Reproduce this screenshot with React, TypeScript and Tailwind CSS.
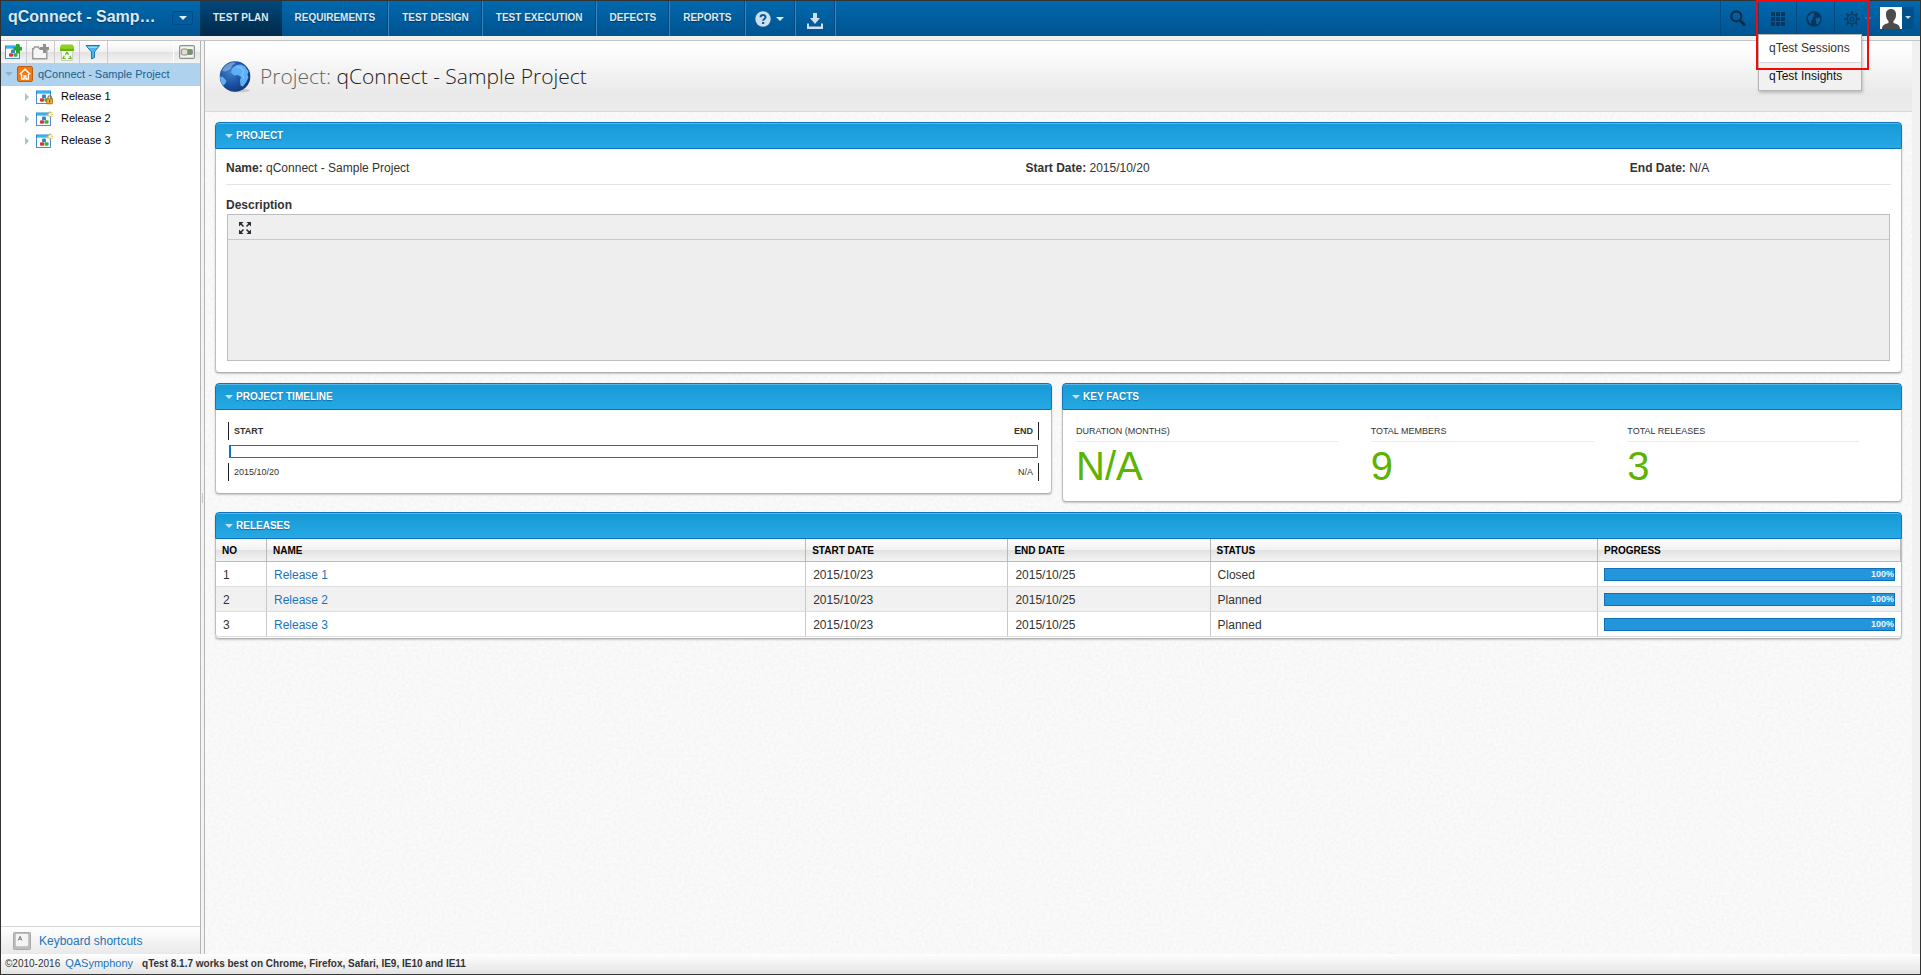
import React from "react";

const CARET = "h-0 w-0 border-x-4 border-t-4 border-x-transparent";

function WindowIcon({ badge }: { badge: "lock" | "spark" | "plus" }) {
  return (
    <svg width="17" height="16" viewBox="0 0 17 16" aria-hidden="true">
      <rect x="0.5" y="2.5" width="14" height="12" fill="#fdfeff" stroke="#4a8fd0" />
      <rect x="0" y="1.5" width="15" height="3" fill="#1f86dc" />
      <rect x="1" y="2.3" width="13" height="1.5" fill="#37c5f5" />
      <rect x="6" y="5.600" width="4" height="3.600" rx="1" fill="#3a7fd0" />
      <rect x="4" y="9.200" width="4" height="3.600" rx="1" fill="#d23a34" />
      <rect x="8.500" y="9.200" width="4" height="3.600" rx="1" fill="#3fae3a" />
      {badge === "plus" && <path d="M11 0h3.500v3H17v3.500h-2.500v3H11v-3H8.500V3H11z" fill="#2aa52c" />}
      {badge === "lock" && (
        <g>
          <path d="M12 10V8.700a1.800 1.800 0 0 1 3.600 0V10" fill="none" stroke="#8d7a4e" strokeWidth="1.3" />
          <rect x="10.600" y="9.800" width="6" height="5" rx="0.5" fill="#f5b23a" stroke="#9c6410" strokeWidth="0.8" />
          <rect x="13.100" y="11" width="1.100" height="2.400" fill="#6b4208" />
        </g>
      )}
      {badge === "spark" && (
        <g>
          <path d="M14 0v7M10.500 3.500H17M11.600 1.100l4.800 4.800M16.400 1.100l-4.800 4.800" stroke="#d9bd3c" strokeWidth="0.9" />
          <circle cx="14" cy="3.500" r="1.500" fill="#fffbd0" />
        </g>
      )}
    </svg>
  );
}

function HomeIcon() {
  return (
    <svg width="16" height="16" viewBox="0 0 16 16" aria-hidden="true">
      <rect x="0.5" y="0.5" width="15" height="15" rx="1.5" fill="#f27a10" stroke="#c85a06" />
      <path d="M2.8 8.3 8 3.3l5.2 5" fill="none" stroke="#fff" strokeWidth="1.5" />
      <path d="M4.6 8v5h2.5v-3h1.8v3h2.5V8" fill="none" stroke="#fff" strokeWidth="1.3" />
    </svg>
  );
}

function NewFolderIcon() {
  return (
    <svg width="17" height="16" viewBox="0 0 17 16" aria-hidden="true">
      <path d="M.7 14.800V4.700h1l.8-1.700h4l.8 1.700h7.500v10.100z" fill="#f5f5f5" stroke="#9a9a9a" strokeWidth="1.400" />
      <path d="M11 0h3v3h3v3h-3v3h-3V6H8V3h3z" fill="#8f8f8f" />
    </svg>
  );
}

function RecycleIcon() {
  return (
    <svg width="16" height="17" viewBox="0 0 16 17" aria-hidden="true">
      <path d="M2 6h12l-.8 10.500H2.800z" fill="#f3f6ee" stroke="#b9c2ad" strokeWidth="0.8" />
      <path d="M2.500.5h11L15 3v4H1V3z" fill="#92d021" />
      <path d="M1 4.800h14V7H1z" fill="#6bb30d" />
      <path d="M6.300 10.700 8 8.300l1.700 2.400M10.800 11.800l1.200 2.700H9.200M6.800 14.500H4l1.300-2.700" fill="none" stroke="#6fb02a" strokeWidth="1.200" />
    </svg>
  );
}

function FunnelIcon() {
  return (
    <svg width="16" height="16" viewBox="0 0 16 16" aria-hidden="true">
      <path d="M1 1.500h13.500L9.500 8v5.500l-3 1.500V8z" fill="#4fb4ec" stroke="#1779b8" />
      <path d="M2.800 2.700h9.900l-.8 1H3.600z" fill="#b9e4fb" />
    </svg>
  );
}

function ToggleIcon() {
  return (
    <svg width="16" height="14" viewBox="0 0 16 14" aria-hidden="true">
      <rect x="0.600" y="0.600" width="14.800" height="12.800" rx="1.500" fill="#f2f4f2" stroke="#87938a" strokeWidth="1.200" />
      <rect x="2.500" y="4.500" width="11" height="5" rx="1" fill="#6f9a5c" stroke="#7c877f" strokeWidth="0.800" />
      <rect x="2.300" y="4" width="6.500" height="6" rx="1.800" fill="#e2ded4" stroke="#85827a" strokeWidth="0.900" />
    </svg>
  );
}

function GlobeBadge() {
  return (
    <svg width="32" height="32" viewBox="0 0 32 32" aria-hidden="true">
      <defs>
        <radialGradient id="ocean" cx="0.35" cy="0.35" r="0.75">
          <stop offset="0" stopColor="#3f7fc8" />
          <stop offset="0.5" stopColor="#1f56a8" />
          <stop offset="1" stopColor="#103274" />
        </radialGradient>
      </defs>
      <ellipse cx="20" cy="29.500" rx="11" ry="1.800" fill="#c9c9c9" />
      <circle cx="16" cy="15.500" r="15.300" fill="url(#ocean)" />
      <path d="M3 10C4.500 6 8 2.500 14 1.300l3 .7-4 2.500-1 3-3 2-2.500 1z" fill="#a5c8ea" opacity=".55" />
      <path d="M1 15.500l3 .5 3.500 4-1.500 3-2 1.500C2 21.500 1 18.500 1 15.500z" fill="#63aef0" />
      <path d="M13 7.500 17.500 4l5-.5 3.500 2 3.500 5-1 3 1 3-2.500 5-3 4-2.500-1-.5-5.500 1-3-3-2-4 .5-3-3 .5-2.500z" fill="#5eb0f5" />
      <path d="M17 6l5 .5 3 4-2 3 2 4" fill="none" stroke="#93d0ff" strokeWidth="1.200" opacity=".7" />
    </svg>
  );
}

function SmallGlobe() {
  return (
    <svg width="16" height="16" viewBox="0 0 16 16" aria-hidden="true">
      <circle cx="8" cy="8" r="7.800" fill="#06365f" />
      <path d="M1.500 6 5 2.500l3.500-.8-1 2L9 5 6.500 6 7 8l-2 1 .5 3-1 .8L2.800 10z" fill="#0b5f9f" />
      <path d="M10.500 7l3.500-.5.500 3-3 4-1.500-1 .3-2.500-1-1.500z" fill="#0b5f9f" />
    </svg>
  );
}

function GearIcon() {
  return (
    <svg width="16" height="16" viewBox="0 0 16 16" fill="none" stroke="#0a3c68" aria-hidden="true">
      <circle cx="8" cy="8" r="4.700" strokeWidth="1.500" />
      <circle cx="8" cy="8" r="1.900" strokeWidth="1.400" />
      <path d="M8 .3v2.500M8 13.200v2.500M.3 8h2.500M13.200 8h2.500M2.600 2.600l1.700 1.700M11.700 11.700l1.700 1.700M13.400 2.600l-1.700 1.700M4.300 11.700l-1.700 1.700" strokeWidth="2" />
    </svg>
  );
}

const navItems = ["REQUIREMENTS", "TEST DESIGN", "TEST EXECUTION", "DEFECTS", "REPORTS"];
const navCell = "flex items-center border-r border-r-[#3a83ba] shadow-[inset_-1px_0_0_#014a80]";
const darkCell = "flex items-center justify-center border-l border-l-[#014a80]";

function TopBar() {
  return (
    <header className="flex h-[35px] shrink-0 bg-linear-to-b from-[#0069ad] to-[#005391]">
      <div className="flex w-[199px] shrink-0 items-center justify-between pr-[7px] pb-[3px] pl-[7px]">
        <span className="text-[16px] leading-6 font-bold text-[#dce8f2] [text-shadow:0_1px_1px_#00335c]">qConnect - Samp…</span>
        <button aria-label="Switch project" className="mt-[2px] flex h-[14px] w-[21px] items-center justify-center rounded-[3px] border border-[#00498a] bg-[#005ea0]">
          <span className={`${CARET} border-t-[#e6eef5]`} />
        </button>
      </div>
      <nav className="flex text-[10px] font-bold text-[#dfe9f1] [text-shadow:0_1px_1px_#00335c]">
        <a href="#plan" className="flex items-center bg-linear-to-b from-[#00487c] to-[#002a49] px-[13px] pb-[3px]">
          TEST PLAN
        </a>
        {navItems.map((n) => (
          <a key={n} href="#section" className={`${navCell} px-[13px] pb-[3px]`}>
            {n}
          </a>
        ))}
        <button aria-label="Help" className={`${navCell} w-[50px] justify-center gap-[5px] pr-[2px]`}>
          <svg width="16" height="16" viewBox="0 0 16 16" aria-hidden="true">
            <circle cx="8" cy="8" r="7.700" fill="#cfdfec" />
            <path d="M5.600 6.200c0-3 4.900-3 4.900 0 0 1.800-2.400 1.700-2.400 3.600" fill="none" stroke="#005c9c" strokeWidth="2" />
            <rect x="7" y="11" width="2.200" height="2" fill="#005c9c" />
          </svg>
          <span className={`${CARET} border-t-[#dfe9f1]`} />
        </button>
        <button aria-label="Download" className={`${navCell} w-10 justify-center pt-1`}>
          <svg width="16" height="16" viewBox="0 0 16 16" fill="#cfdfec" aria-hidden="true">
            <path d="M6 0h4v5h3L8 11 3 5h3z" />
            <path d="M0 10.500h2v3h12v-3h2V16H0z" />
          </svg>
        </button>
      </nav>
      <div className="ml-auto flex">
        <button aria-label="Search" className={`${darkCell} w-[38px] pr-1`}>
          <svg width="16" height="17" viewBox="0 0 16 17" fill="none" stroke="#0a2c49" aria-hidden="true">
            <circle cx="6.300" cy="6.300" r="5" strokeWidth="2.200" />
            <path d="M10 10.200l5 5.300" strokeWidth="2.800" />
          </svg>
        </button>
        <div className="relative flex">
          <button aria-label="Applications" className={`${darkCell} w-[38px]`}>
            <svg width="14" height="14" viewBox="0 0 14 14" fill="#07365f" aria-hidden="true">
              {[0, 5, 10].map((y) => [0, 5, 10].map((x) => <rect key={`${x}-${y}`} x={x} y={y} width="4" height="4" />))}
            </svg>
          </button>
          <div role="menu" className="absolute top-[33px] left-0 z-10 w-[104px] border border-[#b4b4b4] bg-[#f1f1f1] text-[12px] leading-[27px] text-[#111] shadow-[1px_2px_3px_rgba(0,0,0,0.2)]">
            <a role="menuitem" href="#sessions" className="block border-b border-[#d8d8d8] bg-white pl-[10px] text-[#333]">
              qTest Sessions
            </a>
            <a role="menuitem" href="#insights" className="block pl-[10px]">
              qTest Insights
            </a>
          </div>
          <div className="pointer-events-none absolute -top-px -left-[2px] z-20 h-[70px] w-[113px] border-2 border-[#f50a0a]" />
        </div>
        <button aria-label="Language" className={`${darkCell} w-[38px] pr-1`}>
          <SmallGlobe />
        </button>
        <button aria-label="Settings" className={`${darkCell} w-[46px] gap-1`}>
          <GearIcon />
          <span className={`${CARET} border-t-[#3d6f9c]`} />
        </button>
        <button aria-label="Account" className="mr-[6px] flex items-center pb-[2px]">
          <svg width="22" height="22" viewBox="0 0 22 22" aria-hidden="true">
            <rect width="22" height="22" fill="#fff" />
            <path d="M2 22c0-4 3-5 6.500-6v-2C6 12 6 9 6 7c0-3.500 2.500-5 5-5s5 1.500 5 5c0 2 0 5-2.500 7v2c3.500 1 6.500 2 6.500 6z" fill="#4c4c4c" />
          </svg>
          <span className="flex h-[22px] w-3 items-center justify-center bg-[#00508c]">
            <span className="h-0 w-0 border-x-3 border-t-3 border-x-transparent border-t-[#c5d6e5]" />
          </span>
        </button>
      </div>
    </header>
  );
}

const barGradient = "bg-[linear-gradient(#ffffff,#f1f1f1_50%,#e2e2e2_50%,#f4f4f4)]";
const toolButton = "flex items-center justify-center border-r border-[#cbcbcb]";

function Sidebar() {
  return (
    <aside className="flex w-[199px] shrink-0 flex-col bg-white text-[11px]">
      <div className={`flex h-[22px] shrink-0 ${barGradient}`}>
        <button aria-label="New release" className={`${toolButton} w-[26px] pr-px`}>
          <WindowIcon badge="plus" />
        </button>
        <button aria-label="New folder" className={`${toolButton} w-7`}>
          <NewFolderIcon />
        </button>
        <button aria-label="Recycle" className={`${toolButton} w-[25px]`}>
          <RecycleIcon />
        </button>
        <button aria-label="Filter" className={`${toolButton} w-7 pr-[2px]`}>
          <FunnelIcon />
        </button>
        <button aria-label="Toggle view" className="ml-auto flex w-[27px] items-center justify-center border-l border-white pr-px">
          <ToggleIcon />
        </button>
      </div>
      <ul className="grow">
        <li className="flex h-[23px] items-center bg-[#afd3ee] pb-px pl-1 text-[#17608f]">
          <span className={`${CARET} border-t-[#8fb4c9]`} />
          <span className="mr-[5px] ml-1">
            <HomeIcon />
          </span>
          qConnect - Sample Project
        </li>
        {(["lock", "spark", "spark"] as const).map((badge, i) => (
          <li key={i} className="flex h-[22px] items-center pb-px pl-6 text-black">
            <span className="h-0 w-0 border-y-4 border-l-4 border-y-transparent border-l-[#a9c3cf]" />
            <span className="mr-2 ml-[7px]">
              <WindowIcon badge={badge} />
            </span>
            Release {i + 1}
          </li>
        ))}
      </ul>
      <a href="#shortcuts" className="flex h-7 shrink-0 items-center gap-2 border-t border-[#d5d5d5] bg-linear-to-b from-white to-[#e9e9e9] pt-px pl-3 text-[12px] text-[#1a75bb]">
        <svg width="18" height="18" viewBox="0 0 19 19" aria-hidden="true">
          <rect x="0.500" y="0.500" width="18" height="18" rx="1" fill="#bdbdbd" stroke="#a6a6a6" />
          <rect x="3" y="2" width="13" height="13" rx="1.500" fill="#f4f4f4" />
          <path d="M5.500 9 7.500 4.500 9.500 9M6.300 7.500h2.400" fill="none" stroke="#777" />
        </svg>
        Keyboard shortcuts
      </a>
    </aside>
  );
}

function Panel({ title, children }: { title: string; children: React.ReactNode }) {
  return (
    <section className="rounded-[4px] border-b border-[#b0b0b0] bg-white shadow-[0_1px_2px_rgba(0,0,0,0.2)]">
      <h2 className="flex h-[27px] items-center rounded-t-[4px] border border-[#0f74bd] bg-linear-to-b from-[#159ad5] to-[#26a8e4] pl-[9px] text-[10px] font-bold text-white shadow-[inset_0_1px_0_#56b9e8] [text-shadow:0_1px_1px_#0c6ba6]">
        <span className={`mr-[3px] ${CARET} border-t-[#bfe6fa]`} />
        {title}
      </h2>
      <div className="rounded-b-[4px] border-x border-[#bdbdbd]">{children}</div>
    </section>
  );
}

function ProjectPanel() {
  return (
    <Panel title="PROJECT">
      <div className="px-[10px] pb-[11px] text-[12px] text-[#333]">
        <div className="grid h-9 grid-cols-[799fr_604fr_261fr] items-center border-b border-[#e4e4e4] pt-[2px]">
          <div><b>Name:</b> qConnect - Sample Project</div>
          <div><b>Start Date:</b> 2015/10/20</div>
          <div><b>End Date:</b> N/A</div>
        </div>
        <label htmlFor="description" className="block pt-[11px] leading-[18px] font-bold">Description</label>
        <div className="mx-px border border-[#bdbdbd] bg-[#eeeeee]">
          <div className="flex h-[25px] items-center border-b border-[#c9c9c9] bg-[#efefef] pt-[2px] pl-[11px]">
            <button aria-label="Maximize">
              <svg width="12" height="12" viewBox="0 0 12 12" fill="#2b2b33" stroke="#2b2b33" strokeWidth="1.500" aria-hidden="true">
                <path d="M1.500 1.500 4.500 4.500M10.500 1.500 7.500 4.500M1.500 10.500 4.500 7.500M10.500 10.500 7.500 7.500" />
                <path stroke="none" d="M0 0h4.500L0 4.500zM12 0v4.500L7.500 0zM0 12V7.500L4.500 12zM12 12H7.500L12 7.500z" />
              </svg>
            </button>
          </div>
          <textarea id="description" readOnly className="block h-[120px] w-full resize-none bg-transparent p-2 outline-none" />
        </div>
      </div>
    </Panel>
  );
}

const tickRow = "flex h-[18px] items-center justify-between border-x border-[#222] px-[5px] pt-px";

function TimelinePanel() {
  return (
    <Panel title="PROJECT TIMELINE">
      <div className="px-3 pt-3 pb-3 text-[9px] text-[#333]">
        <div className={`${tickRow} font-bold`}>
          <span>START</span>
          <span>END</span>
        </div>
        <div className="mx-px my-[5px] h-[13px] border border-l-2 border-[#1374bd] bg-white" />
        <div className={tickRow}>
          <span>2015/10/20</span>
          <span>N/A</span>
        </div>
      </div>
    </Panel>
  );
}

const facts = [
  ["DURATION (MONTHS)", "N/A"],
  ["TOTAL MEMBERS", "9"],
  ["TOTAL RELEASES", "3"],
];

function FactsPanel() {
  return (
    <Panel title="KEY FACTS">
      <dl className="grid grid-cols-[295fr_257fr_265fr] pt-3 pr-[9px] pb-[11px] pl-[13px]">
        {facts.map(([label, value]) => (
          <div key={label} className="pr-[33px]">
            <dt className="border-b border-[#ececec] text-[9px] leading-[19px] text-[#333]">{label}</dt>
            <dd className="text-[40px] leading-[48px] text-[#5cb400]">{value}</dd>
          </div>
        ))}
      </dl>
    </Panel>
  );
}

const columns = ["NO", "NAME", "START DATE", "END DATE", "STATUS", "PROGRESS"];
const releases = [
  { name: "Release 1", start: "2015/10/23", end: "2015/10/25", status: "Closed" },
  { name: "Release 2", start: "2015/10/23", end: "2015/10/25", status: "Planned" },
  { name: "Release 3", start: "2015/10/23", end: "2015/10/25", status: "Planned" },
];
const cell = "border-r border-[#c9c9c9] pl-[7px]";

function ReleasesPanel() {
  return (
    <Panel title="RELEASES">
      <table className="mb-px w-full table-fixed border-separate border-spacing-0 text-left text-[12px] text-[#333]">
        <colgroup>
          <col className="w-[51px]" />
          <col className="w-[32%]" />
          <col className="w-[12%]" />
          <col className="w-[12%]" />
          <col className="w-[23%]" />
          <col />
        </colgroup>
        <thead>
          <tr className="h-[23px] text-[10px] text-black">
            {columns.map((c) => (
              <th key={c} className={`border-r border-b border-[#b9b9b9] pl-[6px] font-bold ${barGradient}`}>{c}</th>
            ))}
          </tr>
        </thead>
        <tbody>
          {releases.map((r, i) => (
            <tr key={r.name} className="h-[25px] even:bg-[#f1f1f1] *:border-b *:border-b-[#dedede] *:pt-px">
              <td className={cell}>{i + 1}</td>
              <td className={cell}>
                <a href="#release" className="text-[#1a75bb]">{r.name}</a>
              </td>
              <td className={cell}>{r.start}</td>
              <td className={cell}>{r.end}</td>
              <td className={cell}>{r.status}</td>
              <td className="px-[6px]">
                <div role="progressbar" aria-label={r.name} aria-valuenow={100} className="flex h-[13px] items-center justify-end border border-[#0f6fbb] bg-[#2395da] text-[9px] font-bold text-[#eaf5fc]">
                  100%
                </div>
              </td>
            </tr>
          ))}
        </tbody>
      </table>
    </Panel>
  );
}

function PaperTexture() {
  return (
    <svg className="pointer-events-none absolute inset-0 h-full w-full opacity-10" aria-hidden="true">
      <filter id="paper">
        <feTurbulence type="fractalNoise" baseFrequency="0.35" numOctaves="2" />
        <feColorMatrix type="matrix" values="0.7 0 0 0 0.2  0.7 0 0 0 0.2  0.7 0 0 0 0.2  0 0 0 0 1" />
      </filter>
      <rect width="100%" height="100%" filter="url(#paper)" />
    </svg>
  );
}

export default function App() {
  return (
    <div className="flex min-h-screen flex-col border border-[#333] bg-[#f1f1f1] font-['Liberation_Sans',Arial,sans-serif]">
      <TopBar />
      <div className="mt-1 flex grow border-t border-[#c4c4c4]">
        <Sidebar />
        <div className="flex w-[5px] shrink-0 items-center justify-center border-x border-[#b5b5b5] bg-[#f3f3f3]">
          <span className="h-[10px] w-px bg-[#c4c4c4]" />
        </div>
        <main className="relative mr-2 grow bg-white">
          <PaperTexture />
          <div className="relative flex h-[71px] items-center gap-[9px] border-b border-[#dadada] bg-[linear-gradient(#ffffff,#fbfbfb_20%,#e9e9e9_75%,#ebebeb)] pt-px pl-[14px]">
            <GlobeBadge />
            <h1 className="pb-[2px] font-['Open_Sans',sans-serif] text-[21px] leading-7 font-light text-[#222]">
              <span className="text-[#666]">Project:</span> qConnect - Sample Project
            </h1>
          </div>
          <div className="relative flex flex-col gap-[10px] p-[10px]">
            <ProjectPanel />
            <div className="grid grid-cols-[837fr_840fr] items-start gap-[10px]">
              <TimelinePanel />
              <FactsPanel />
            </div>
            <ReleasesPanel />
          </div>
        </main>
      </div>
      <footer className="flex h-5 shrink-0 items-center bg-linear-to-b from-white to-[#e4e4e4] pb-px pl-1 text-[10px] text-[#333]">
        <span>©2010-2016</span>
        <a href="#vendor" className="ml-[5px] text-[11px] text-[#1a75bb]">QASymphony</a>
        <b className="ml-[9px]">qTest 8.1.7 works best on Chrome, Firefox, Safari, IE9, IE10 and IE11</b>
      </footer>
    </div>
  );
}
